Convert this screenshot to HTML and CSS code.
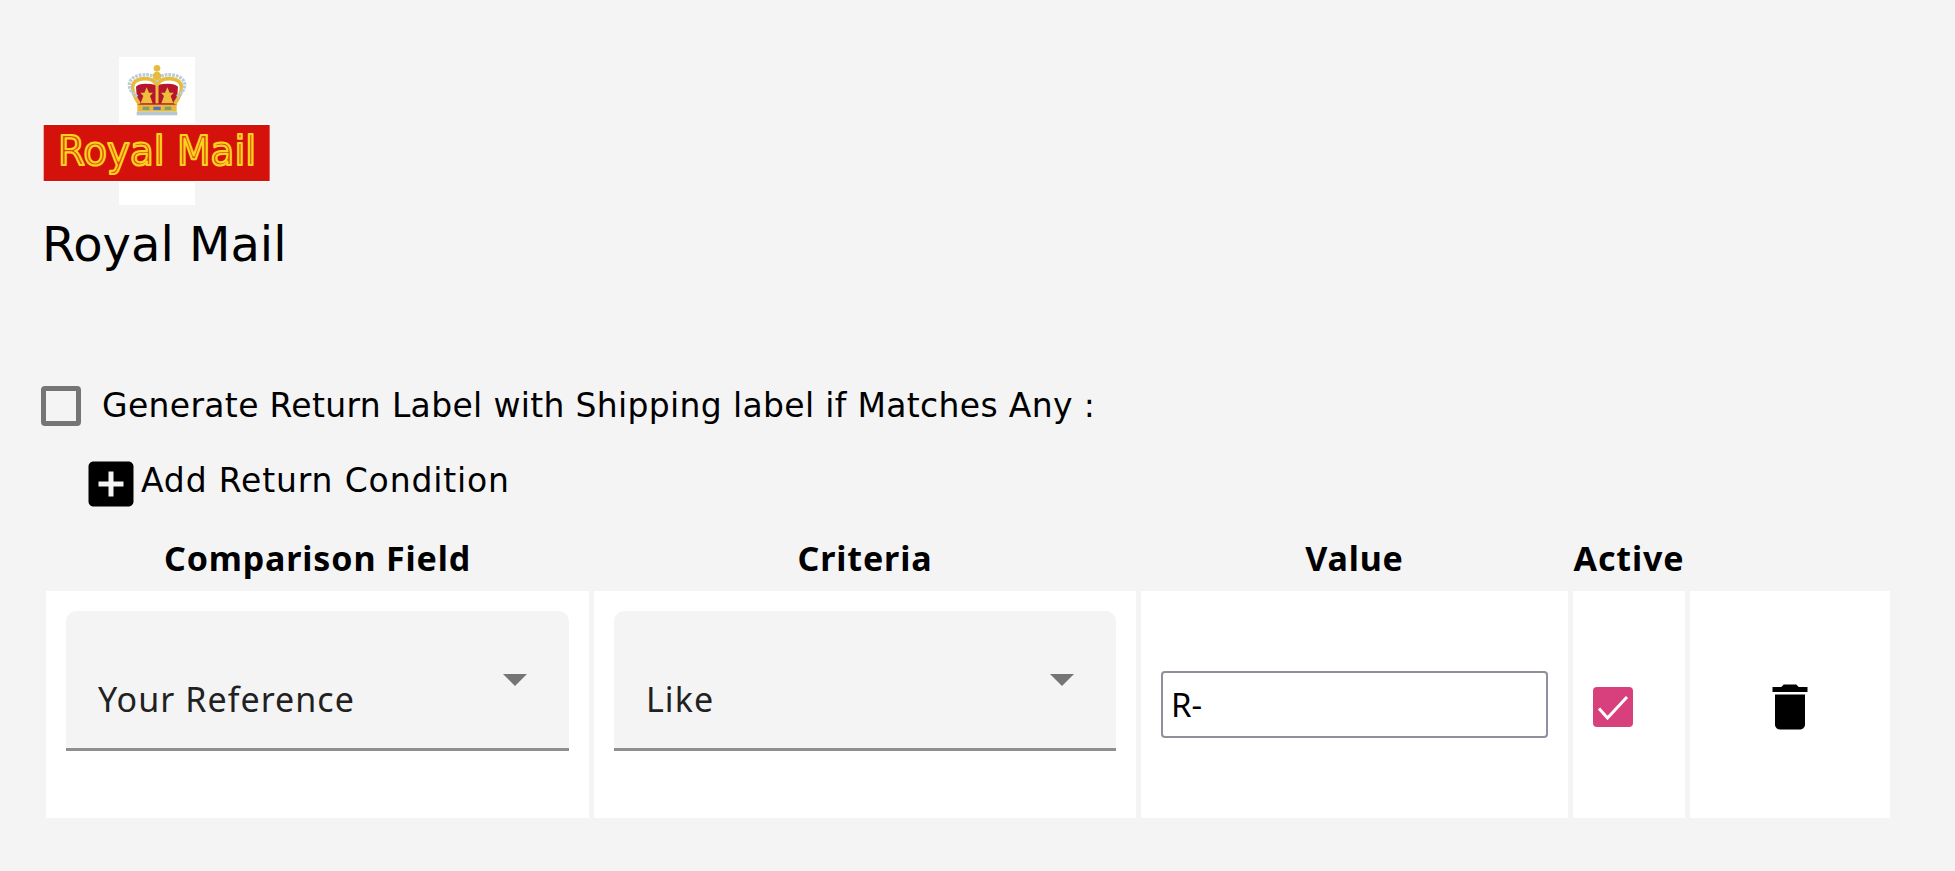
FILE: index.html
```html
<!DOCTYPE html>
<html lang="en">
<head>
<meta charset="utf-8">
<title>Royal Mail</title>
<link rel="stylesheet" href="styles.css">
</head>
<body>
<main class="page">
  <svg class="logo" width="227" height="148" viewBox="0 0 227 148" aria-label="Royal Mail logo">
    <defs><filter id="soft"><feGaussianBlur stdDeviation="0.35"/></filter></defs>
    <rect x="76" width="76" height="148" fill="#fff"/>
    <g transform="scale(.33333) translate(-39 -51)">
      <rect x="37" y="250" width="688" height="176" fill="#fff"/>
      <rect x="41" y="255" width="678" height="168" fill="#d4120b"/>
      <text x="84" y="375" class="logo-text" textLength="594" lengthAdjust="spacingAndGlyphs">Royal Mail</text>
      <g filter="url(#soft)">
        <path d="M322 195 L318 140 Q330 125 380 135 Q430 125 444 140 L440 195 Z" fill="#b5182f"/>
        <path d="M328 192 C300 150 298 120 340 116 C365 114 375 124 381 134 C387 124 397 114 422 116 C464 120 462 150 434 192" fill="none" stroke="#e8bb3e" stroke-width="11"/>
        <path d="M381 128 V190" stroke="#e8bb3e" stroke-width="9"/>
        <path d="M322 170 C288 150 288 110 335 105 C360 102 372 108 381 120 C390 108 402 102 427 105 C474 110 474 150 440 170" fill="none" stroke="#b9ccd8" stroke-width="10" stroke-dasharray="8 3"/>
        <path d="M350 142 l7 16 h12 l-9 10 l8 22 h-36 l8 -22 l-9 -10 h12 Z M412 142 l7 16 h12 l-9 10 l8 22 h-36 l8 -22 l-9 -10 h12 Z" fill="#eebd3a"/>
        <circle cx="381" cy="85" r="10" fill="#e8bb3e"/>
        <circle cx="381" cy="108" r="13" fill="#e8bb3e"/>
        <rect x="322" y="194" width="118" height="21" fill="#e8b93c"/>
        <rect x="370" y="200" width="22" height="10" fill="#5a74b0"/>
        <rect x="338" y="200" width="20" height="10" fill="#7fa06a"/>
        <rect x="404" y="200" width="20" height="10" fill="#7fa06a"/>
        <rect x="320" y="215" width="122" height="11" fill="#b7c6d1"/>
      </g>
    </g>
  </svg>
  <h1 class="title">Royal Mail</h1>

  <label class="return-row">
    <span class="check-empty"></span>
    <span class="return-text">Generate Return Label with Shipping label if Matches Any :</span>
  </label>

  <div class="add-row">
    <svg class="add-icon" viewBox="0 0 24 24" width="60" height="60"><path d="M19 3H5c-1.11 0-2 .9-2 2v14c0 1.1.89 2 2 2h14c1.1 0 2-.9 2-2V5c0-1.1-.9-2-2-2zm-2 10h-4v4h-2v-4H7v-2h4V7h2v4h4v2z"/></svg>
    <span class="add-text">Add Return Condition</span>
  </div>

  <section class="grid">
    <div class="head">Comparison Field</div>
    <div class="head">Criteria</div>
    <div class="head">Value</div>
    <div class="head">Active</div>
    <div class="head"></div>

    <div class="cell">
      <div class="select"><span class="select-value">Your Reference</span><span class="arrow"></span></div>
    </div>
    <div class="cell">
      <div class="select"><span class="select-value">Like</span><span class="arrow"></span></div>
    </div>
    <div class="cell cell-center">
      <input class="value-input" type="text" value="R-">
    </div>
    <div class="cell cell-check">
      <span class="check-on">
        <svg viewBox="0 0 40 40" width="40" height="40"><path d="M6 21.5 L14.5 31 L34 10" fill="none" stroke="#fff" stroke-width="3"/></svg>
      </span>
    </div>
    <div class="cell cell-center cell-trash">
      <svg viewBox="0 0 24 24" width="60" height="60"><path d="M6 19c0 1.1.9 2 2 2h8c1.1 0 2-.9 2-2V7H6v12zM19 4h-3.5l-1-1h-5l-1 1H5v2h14V4z"/></svg>
    </div>
  </section>
</main>
</body>
</html>
```

FILE: styles.css
```css
* { box-sizing: border-box; }
html, body { margin: 0; height: 100%; }
body {
  background: #f4f4f5;
  color: #000;
  font-family: "DejaVu Sans", sans-serif;
  overflow: hidden;
}
.page { padding: 57px 0 0 43px; }
.logo { display: block; }
.logo-text {
  font-family: "DejaVu Sans", sans-serif;
  font-size: 120px;
  fill: #dd4a0c;
  stroke: #ffd21f;
  stroke-width: 6.5px;
  stroke-linejoin: round;
}
.title {
  margin: 9px 0 0 -1px;
  font-size: 48px;
  line-height: 60px;
  font-weight: 400;
}
.return-row {
  display: flex;
  align-items: center;
  margin: 112px 0 0 -2px;
  gap: 21px;
}
.check-empty {
  width: 40px;
  height: 40px;
  border: 5px solid #757575;
  border-radius: 4px;
  flex: none;
}
.return-text { font-size: 33px; line-height: 40px; letter-spacing: .33px; }
.add-row {
  display: flex;
  align-items: center;
  margin: 28px 0 0 38px;
  height: 60px;
}
.add-icon { flex: none; }
.add-text { font-size: 33px; letter-spacing: .85px; margin-top: -8px; }
.grid {
  display: grid;
  grid-template-columns: 543px 542px 427px 112px 200px;
  column-gap: 5px;
  margin: 0 0 0 3px;
}
.head {
  font-family: "Noto Sans", sans-serif;
  font-size: 34px;
  font-weight: 700;
  letter-spacing: .85px;
  text-align: center;
  line-height: 40px;
  height: 77px;
  padding-top: 24px;
  white-space: nowrap;
}
.cell {
  background: #fff;
  height: 227px;
  padding: 20px;
  display: flex;
  align-items: flex-start;
}
.select {
  width: 100%;
  height: 140px;
  background: #f4f4f5;
  border-radius: 10px 10px 0 0;
  border-bottom: 3px solid #8f8f8f;
  display: flex;
  align-items: flex-start;
  justify-content: space-between;
  padding: 63px 42px 0 32px;
}
.select-value {
  font-family: "Noto Sans", sans-serif;
  font-size: 34px;
  letter-spacing: 1.05px;
  line-height: 50px;
  color: #212121;
}
.arrow {
  width: 0;
  height: 0;
  margin: 0 0 0 auto;
  border-left: 12px solid transparent;
  border-right: 12px solid transparent;
  border-top: 12px solid #757575;
}
.cell-center { align-items: center; justify-content: center; }
.value-input {
  width: 387px;
  height: 67px;
  border: 2px solid #8f8f9d;
  border-radius: 4px;
  background: #fff;
  font-family: "Noto Sans", sans-serif;
  font-size: 33px;
  color: #000;
  padding: 0 8px;
  outline: none;
}
.cell-check { align-items: flex-start; padding: 96px 0 0 20px; }
.check-on {
  display: block;
  width: 40px;
  height: 40px;
  background: #d8407d;
  border-radius: 4px;
}
.check-on svg { display: block; }
.cell-trash svg { margin-top: 5px; }
```
